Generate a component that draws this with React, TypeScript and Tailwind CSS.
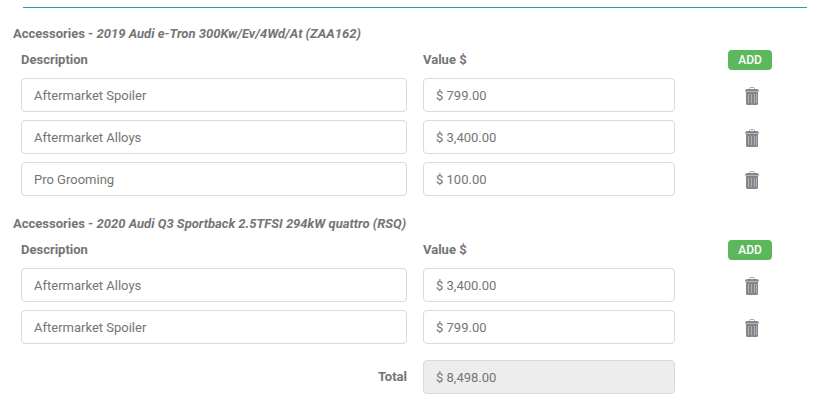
import React, { useState } from "react";

type Accessory = {
  id: number;
  description: string;
  value: string;
};

type Vehicle = {
  name: string;
  items: Accessory[];
};

const VEHICLES: Vehicle[] = [
  {
    name: "2019 Audi e-Tron 300Kw/Ev/4Wd/At (ZAA162)",
    items: [
      { id: 1, description: "Aftermarket Spoiler", value: "$ 799.00" },
      { id: 2, description: "Aftermarket Alloys", value: "$ 3,400.00" },
      { id: 3, description: "Pro Grooming", value: "$ 100.00" },
    ],
  },
  {
    name: "2020 Audi Q3 Sportback 2.5TFSI 294kW quattro (RSQ)",
    items: [
      { id: 4, description: "Aftermarket Alloys", value: "$ 3,400.00" },
      { id: 5, description: "Aftermarket Spoiler", value: "$ 799.00" },
    ],
  },
];

const inputClass =
  "block w-full h-[34px] px-3 rounded border border-[#dadada] text-[#757575]";

const toNumber = (value: string) =>
  Number(value.replace(/[^0-9.]/g, "")) || 0;

const TrashIcon = () => (
  <svg width="14" height="18" viewBox="0 0 14 18" fill="none" aria-hidden="true">
    <path d="M4.5 2V1.5Q4.5 0.5 5.5 0.5H8.5Q9.5 0.5 9.5 1.5V2" stroke="#a3a7ab" />
    <path d="M1.5 2H12.5L14 3.5V5H0V3.5Z" fill="#85868a" />
    <path d="M0 4.5H14" stroke="#b4b5b8" />
    <path d="M1 5H13V16.5Q13 18 11.5 18H2.5Q1 18 1 16.5Z" fill="#85868a" />
    <path d="M3.5 7V16M9.5 7V16" stroke="#9db4d6" />
    <path d="M6.5 7V16M11.5 7V16" stroke="#c0ab98" />
  </svg>
);

const AccessoryGroup = ({
  vehicle,
  onChange,
}: {
  vehicle: Vehicle;
  onChange: (items: Accessory[]) => void;
}) => {
  const update = (id: number, patch: Partial<Accessory>) =>
    onChange(
      vehicle.items.map((item) =>
        item.id === id ? { ...item, ...patch } : item
      )
    );

  const add = () =>
    onChange([...vehicle.items, { id: Date.now(), description: "", value: "" }]);

  const remove = (id: number) =>
    onChange(vehicle.items.filter((item) => item.id !== id));

  return (
    <section>
      <h2 className="mb-1.5 font-bold">
        Accessories - <em>{vehicle.name}</em>
      </h2>
      <div className="grid grid-cols-12 items-center mb-2 font-bold">
        <div className="col-span-6 px-2">Description</div>
        <div className="col-span-4 px-2">Value $</div>
        <div className="col-span-2 flex justify-center">
          <button
            type="button"
            onClick={add}
            className="h-5 px-2.5 rounded bg-[#5cb85c] text-xs font-medium text-white cursor-pointer"
          >
            ADD
          </button>
        </div>
      </div>
      <div className="flex flex-col gap-2">
        {vehicle.items.map((item) => (
          <div key={item.id} className="grid grid-cols-12 items-center">
            <div className="col-span-6 px-2">
              <input
                type="text"
                aria-label="Description"
                value={item.description}
                onChange={(e) => update(item.id, { description: e.target.value })}
                className={inputClass}
              />
            </div>
            <div className="col-span-4 px-2">
              <input
                type="text"
                aria-label="Value $"
                value={item.value}
                onChange={(e) => update(item.id, { value: e.target.value })}
                className={inputClass}
              />
            </div>
            <div className="col-span-2 flex justify-center pt-0.5 pl-1">
              <button
                type="button"
                aria-label="Remove"
                onClick={() => remove(item.id)}
                className="cursor-pointer"
              >
                <TrashIcon />
              </button>
            </div>
          </div>
        ))}
      </div>
    </section>
  );
};

const App = () => {
  const [vehicles, setVehicles] = useState(VEHICLES);

  const total = vehicles
    .flatMap((vehicle) => vehicle.items)
    .reduce((sum, item) => sum + toNumber(item.value), 0);

  return (
    <main className="pl-[13px] pr-3 pt-[7px] pb-6 bg-white font-['Roboto','Liberation_Sans',sans-serif] text-[13px] leading-5 text-[#757575]">
      <hr className="mx-2.5 mb-4 border-[#3694b5]" />
      <div className="flex flex-col gap-[18px] mb-4">
        {vehicles.map((vehicle, index) => (
          <AccessoryGroup
            key={vehicle.name}
            vehicle={vehicle}
            onChange={(items) =>
              setVehicles(
                vehicles.map((v, i) => (i === index ? { ...v, items } : v))
              )
            }
          />
        ))}
      </div>
      <div className="grid grid-cols-12 items-center">
        <label htmlFor="total" className="col-span-6 px-2 text-right font-bold">
          Total
        </label>
        <div className="col-span-4 px-2">
          <input
            id="total"
            type="text"
            readOnly
            value={
              "$ " + total.toLocaleString("en-US", { minimumFractionDigits: 2 })
            }
            className={`${inputClass} bg-[#ededed]`}
          />
        </div>
      </div>
    </main>
  );
};

export default App;
